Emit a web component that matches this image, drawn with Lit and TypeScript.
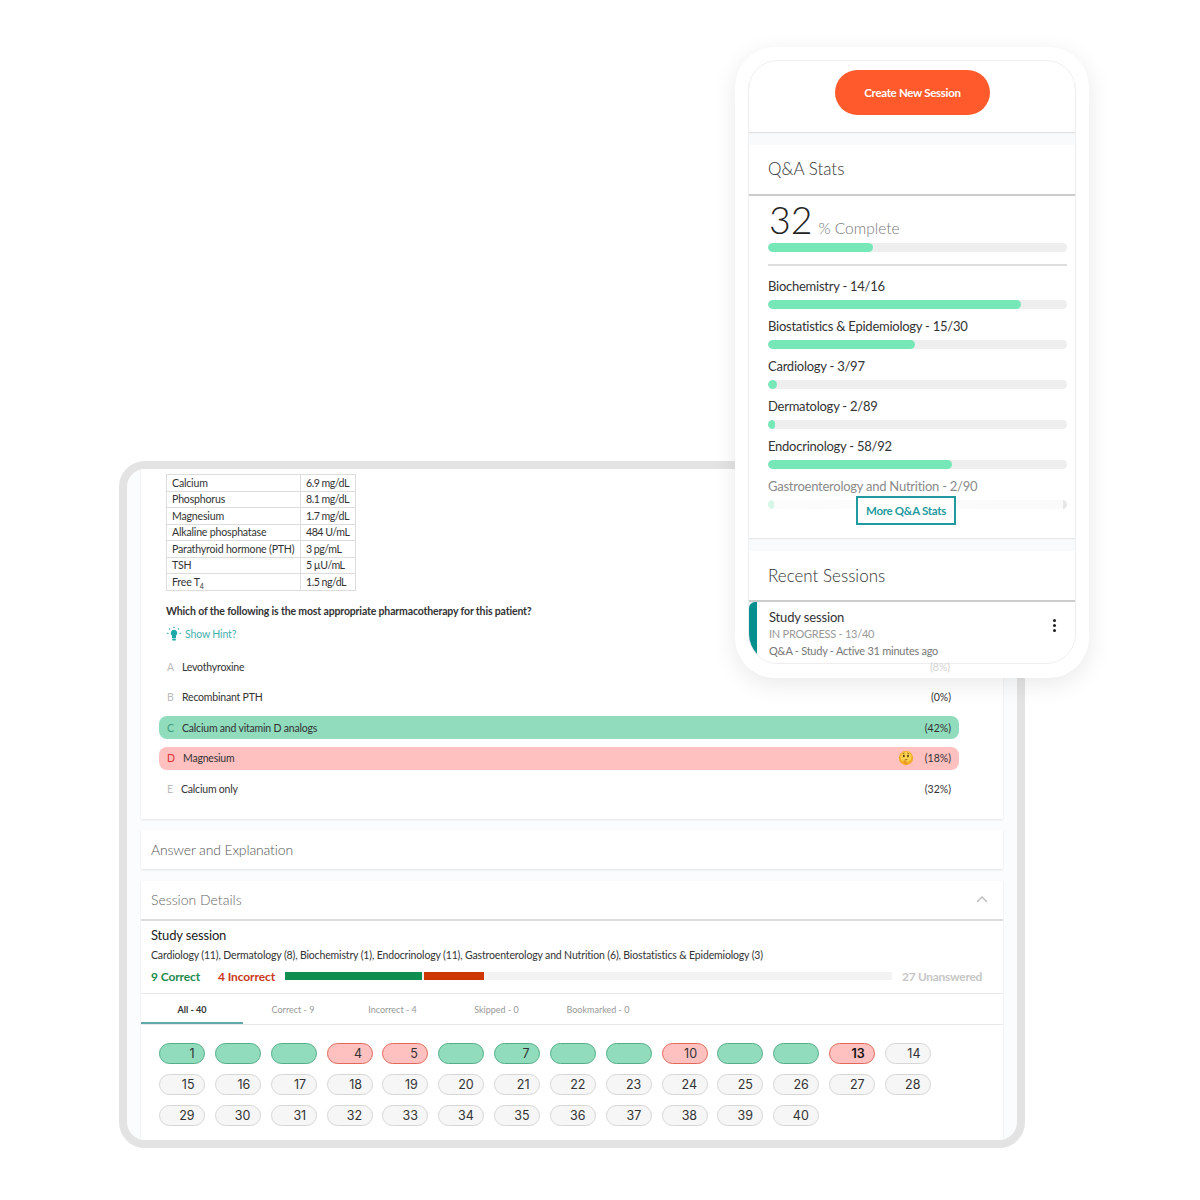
import { LitElement, html, css, svg } from "lit";
import { customElement } from "lit/decorators.js";

const labs = [["Calcium","6.9 mg/dL"],["Phosphorus","8.1 mg/dL"],["Magnesium","1.7 mg/dL"],["Alkaline phosphatase","484 U/mL"],["Parathyroid hormone (PTH)","3 pg/mL"],["TSH","5 µU/mL"]];
const options = [
  { l: "A", t: "Levothyroxine", p: "", c: "" },
  { l: "B", t: "Recombinant PTH", p: "(0%)", c: "" },
  { l: "C", t: "Calcium and vitamin D analogs", p: "(42%)", c: "good" },
  { l: "D", t: "Magnesium", p: "(18%)", c: "bad" },
  { l: "E", t: "Calcium only", p: "(32%)", c: "tight" },
];
const stats = [["Biochemistry - 14/16", 84.5],["Biostatistics & Epidemiology - 15/30", 49.3],["Cardiology - 3/97", 3],["Dermatology - 2/89", 2.4],["Endocrinology - 58/92", 61.7]] as [string, number][];
const tabs = ["All - 40","Correct - 9","Incorrect - 4","Skipped - 0","Bookmarked - 0"];
const goodN = [1,2,3,6,7,8,9,11,12];
const badN = [4,5,10,13];
const hidden = [2,3,6,8,9,11,12];

const thinking = svg`<svg width="16" height="16" viewBox="0 0 16 16"><circle cx="8" cy="8" r="7.2" fill="#f3ad2a"/><circle cx="8" cy="6.8" r="5.4" fill="#fbd24e"/><ellipse cx="5.8" cy="6" rx=".95" ry="1.25" fill="#5a3d14"/><ellipse cx="10" cy="6" rx=".95" ry="1.25" fill="#5a3d14"/><path d="M4.6 3.7l2-.7M9.2 3l2 .9M6.6 10l2.8-.5" stroke="#7a5518" stroke-width=".8" fill="none"/><path d="M5.4 10.8c1.4-.7 3 0 3.6 1.2l.2 2.6c-1.6.3-3-.5-3.4-1.8z" fill="#ee9a22"/></svg>`;
const bulb = svg`<svg width="16" height="16" viewBox="0 0 16 16"><path d="M8 3.8a3.3 3.3 0 0 0-2 5.9V12h4V9.7a3.3 3.3 0 0 0-2-5.9z" fill="#1fa8a8"/><rect x="6.2" y="12.6" width="3.6" height="2" rx=".6" fill="#1fa8a8"/><g fill="#1fa8a8"><circle cx="8" cy="1.4" r=".75"/><circle cx="3.6" cy="3" r=".7"/><circle cx="12.4" cy="3" r=".7"/><rect x=".8" y="6.8" width="1.8" height="1" rx=".5"/><rect x="13.4" y="6.8" width="1.8" height="1" rx=".5"/></g></svg>`;

@customElement("app-root")
export class AppRoot extends LitElement {
  static styles = css`
    :host { display: block; position: relative; width: 1200px; height: 1200px; background: #fff; font-family: Lato, "Open Sans", sans-serif; color: #222; overflow: hidden; padding: 461px 0 0 119px; box-sizing: border-box; }
    * { box-sizing: border-box; }
    .tablet { width: 906px; height: 687px; border: 8px solid #e3e3e3; border-radius: 26px; background: #fbfcfd; overflow: hidden; padding: 0 14px; display: flex; flex-direction: column; }
    .card { background: #fff; box-shadow: 0 1px 2px rgba(0,0,0,.1); }
    .q { height: 350px; padding: 5px 44px 0 18px; margin: 0 0 11px; position: relative; }
    .q-in { padding-left: 7px; }
    table { border-collapse: collapse; font-size: 10.6px; letter-spacing: -.2px; color: #333; }
    td { border: 1px solid #ddd; height: 16.5px; padding: 0 5px; line-height: 14px; white-space: nowrap; }
    td:first-child { width: 134px; }
    td:last-child { width: 55px; letter-spacing: -.5px; }
    sub { font-size: 7px; line-height: 0; }
    .ask { margin: 12px 0 0; font-size: 10.5px; letter-spacing: -.15px; line-height: 16px; font-weight: 700; color: #333; }
    .hint { display: flex; align-items: center; gap: 3px; margin: 7px 0 0; height: 16px; color: #3fb0ad; font-size: 10.5px; letter-spacing: -.15px; }
    .hint svg { display: block; }
    .opts { margin: 13.5px 0 0 0; display: flex; flex-direction: column; gap: 7.5px; }
    .opt { height: 23px; border-radius: 8px; display: flex; align-items: center; padding: 0 8px; font-size: 10.5px; letter-spacing: -.2px; color: #333; }
    .opt .l { width: 15px; color: #bbb; font-size: 10.5px; letter-spacing: 0; }
    .opt.good { background: #90dcbd; }
    .opt.good .l { color: #3f9c7c; }
    .opt.bad { background: #ffc0c0; }
    .opt.bad .l { color: #d33; width: 16px; }
    .opt.tight .l { width: 14px; }
    .opt .t { flex: 1; }
    .opt .p { color: #333; letter-spacing: 0; }
    .opt svg { display: block; margin-right: 11px; }
    .answer { height: 39px; margin-bottom: 12px; padding: 0 10px; display: flex; align-items: center; font-size: 14px; letter-spacing: -.15px; font-weight: 300; color: #555; }
    .details { flex: 1; }
    .dh { height: 40px; padding: 0 10px 2px; display: flex; align-items: center; justify-content: space-between; font-size: 14px; font-weight: 300; color: #666; border-bottom: 2px solid #ddd; }
    .dh svg { display: block; margin-right: 5px; }
    .dt { padding: 5px 10px 0; height: 73px; border-bottom: 1px solid #e6e6e6; }
    .dt h4 { margin: 0; font-size: 13px; letter-spacing: -.15px; line-height: 18px; font-weight: 400; color: #222; }
    .topics { font-size: 10.5px; letter-spacing: -.15px; line-height: 14px; margin-top: 4px; color: #333; }
    .score { display: flex; align-items: center; height: 16px; margin-top: 6px; font-size: 12px; letter-spacing: -.1px; font-weight: 700; }
    .score .c { color: #1d8a4e; width: 67px; }
    .score .i { color: #c9381a; width: 67px; }
    .track { width: 607px; height: 8px; background: #f3f3f3; display: flex; gap: 2px; }
    .track .g { width: 137px; background: #0e8f4f; }
    .track .r { width: 60px; background: #cc3703; }
    .score .u { margin-left: 10px; color: #c6c6c6; letter-spacing: -.3px; }
    .tabs { display: flex; height: 31px; border-bottom: 1px solid #e8e8e8; }
    .tab { display: flex; align-items: center; justify-content: center; font-size: 9px; color: #999; }
    .tab:nth-child(1) { width: 102px; }
    .tab:nth-child(2) { width: 100px; }
    .tab:nth-child(3) { width: 99px; }
    .tab:nth-child(4) { width: 109px; }
    .tab:nth-child(5) { width: 94px; }
    .tab.on { font-weight: 700; color: #333; box-shadow: inset 0 -2px 0 #5fa9a9; }
    .grid { display: grid; grid-template-columns: repeat(14, 46px); column-gap: 9.85px; row-gap: 10px; padding: 18px 0 0 18px; }
    .pill { height: 21px; border-radius: 11px; border: 1px solid #d6d6d6; background: #f6f6f6; display: flex; align-items: center; justify-content: flex-end; padding-right: 9.5px; font-family: Inter, sans-serif; font-size: 12.5px; color: #333; }
    .pill.good { background: #90dcbd; border-color: #53ad88; }
    .pill.bad { background: #ffc0c0; border-color: #e0695a; }
    .pill.strong { font-weight: 600; color: #111; }

    .phone { position: absolute; left: 735px; top: 47px; width: 354px; height: 631px; background: #fff; border-radius: 40px; padding: 13px; box-shadow: 0 6px 24px rgba(0,0,0,.09); }
    .peek { position: absolute; left: 195px; bottom: 5px; font-size: 10.5px; color: #d2d2d2; }
    .screen { height: 604px; border: 1px solid #eee; border-radius: 30px; overflow: hidden; background: #f8fafb; display: flex; flex-direction: column; }
    .top { height: 71px; background: #fff; padding: 9px 0 0 86px; box-shadow: 0 1px 1px rgba(0,0,0,.1); margin-bottom: 13px; }
    .cta { width: 155px; height: 45px; padding-bottom: 1px; border-radius: 23px; background: #ff5a2c; color: #fff; display: flex; align-items: center; justify-content: center; font-size: 11.5px; letter-spacing: -.3px; font-weight: 700; }
    .sec { background: #fff; }
    .stats { height: 394px; position: relative; box-shadow: 0 1px 1px rgba(0,0,0,.08); margin-bottom: 13px; }
    .sh { height: 51px; padding: 0 19px 2px; display: flex; align-items: center; font-size: 17px; font-weight: 300; color: #333; border-bottom: 2px solid #ccc; }
    .recent .sh { padding-bottom: 0; }
    .sb { padding: 0 8px 0 19px; }
    .big { height: 47px; display: flex; align-items: baseline; padding: 2px 0 0 1px; color: #222; font-size: 37.5px; line-height: 44px; font-weight: 300; }
    .big span { font-size: 15.5px; color: #777; margin-left: 6px; }
    .bar { height: 9px; border-radius: 5px; background: #eee; overflow: hidden; }
    .bar i { display: block; height: 100%; border-radius: 5px; background: #76e8b8; }
    .hr { height: 2px; background: #ddd; margin: 12px 0 10px; }
    .row { font-size: 13px; letter-spacing: -.25px; line-height: 20px; color: #333; }
    .row + .bar { margin: 4px 0 7px; }
    .row.fade { color: #8a8a8a; }
    .bar.fade { background: linear-gradient(to right, #fcfcfc 0, #fafafa 98.6%, #e6e6e6 98.6%); }
    .bar.fade i { background: #d6f7e8; }
    .more { position: absolute; left: 107px; top: 351px; width: 100px; height: 29px; border: 2px solid #1f9a9e; background: #fff; color: #1f9a9e; font-size: 11.5px; letter-spacing: -.3px; font-weight: 700; display: flex; align-items: center; justify-content: center; }
    .recent { flex: 1; }
    .session { display: flex; height: 61px; border-left: 8px solid #05908f; border-top-left-radius: 6px; padding: 7px 19px 0 12px; justify-content: space-between; }
    .session b { display: block; font-weight: 400; font-size: 13px; letter-spacing: -.15px; line-height: 17px; color: #333; }
    .session small { display: block; font-size: 11px; letter-spacing: -.25px; line-height: 16.5px; color: #999; }
    .session small.dark { color: #777; }
    .dots { display: flex; flex-direction: column; gap: 2px; padding-top: 10px; }
    .dots i { width: 3px; height: 3px; border-radius: 50%; background: #222; }
  `;

  private pill(n: number) {
    const state = goodN.includes(n) ? "good" : badN.includes(n) ? "bad" : "";
    const strong = n === 13 ? "strong" : "";
    return html`<div class="pill ${state} ${strong}">${hidden.includes(n) ? "" : n}</div>`;
  }

  render() {
    const nums = Array.from({ length: 40 }, (_, i) => i + 1);
    return html`
      <div class="tablet">
        <div class="card q">
          <div class="q-in">
            <table>
              ${labs.map(r => html`<tr><td>${r[0]}</td><td>${r[1]}</td></tr>`)}
              <tr><td>Free T<sub>4</sub></td><td>1.5 ng/dL</td></tr>
            </table>
            <p class="ask">Which of the following is the most appropriate pharmacotherapy for this patient?</p>
            <div class="hint">${bulb}<span>Show Hint?</span></div>
          </div>
          <div class="opts">
            ${options.map(o => html`<div class="opt ${o.c}">
              <span class="l">${o.l}</span><span class="t">${o.t}</span>
              ${o.l === "D" ? thinking : ""}<span class="p">${o.p}</span>
            </div>`)}
          </div>
        </div>
        <div class="card answer">Answer and Explanation</div>
        <div class="card details">
          <div class="dh">Session Details
            <svg width="12" height="7" viewBox="0 0 12 7"><path d="M1 6l5-5 5 5" fill="none" stroke="#bbb" stroke-width="1.4"/></svg>
          </div>
          <div class="dt">
            <h4>Study session</h4>
            <div class="topics">Cardiology (11), Dermatology (8), Biochemistry (1), Endocrinology (11), Gastroenterology and Nutrition (6), Biostatistics &amp; Epidemiology (3)</div>
            <div class="score">
              <span class="c">9 Correct</span><span class="i">4 Incorrect</span>
              <div class="track"><div class="g"></div><div class="r"></div></div>
              <span class="u">27 Unanswered</span>
            </div>
          </div>
          <div class="tabs">${tabs.map((t, i) => html`<div class="tab ${i === 0 ? "on" : ""}">${t}</div>`)}</div>
          <div class="grid">${nums.map(n => this.pill(n))}</div>
        </div>
      </div>

      <div class="phone">
        <div class="screen">
          <div class="top"><div class="cta">Create New Session</div></div>
          <div class="sec stats">
            <div class="sh">Q&amp;A Stats</div>
            <div class="sb">
              <div class="big">32<span>% Complete</span></div>
              <div class="bar"><i style="width:35%"></i></div>
              <div class="hr"></div>
              ${stats.map(s => html`<div class="row">${s[0]}</div><div class="bar"><i style="width:${s[1]}%"></i></div>`)}
              <div class="row fade">Gastroenterology and Nutrition - 2/90</div>
              <div class="bar fade"><i style="width:2%"></i></div>
            </div>
            <div class="more">More Q&amp;A Stats</div>
          </div>
          <div class="sec recent">
            <div class="sh">Recent Sessions</div>
            <div class="session">
              <div>
                <b>Study session</b>
                <small>IN PROGRESS - 13/40</small>
                <small class="dark">Q&amp;A - Study - Active 31 minutes ago</small>
              </div>
              <div class="dots"><i></i><i></i><i></i></div>
            </div>
          </div>
        </div>
        <span class="peek">(8%)</span>
      </div>
    `;
  }
}
